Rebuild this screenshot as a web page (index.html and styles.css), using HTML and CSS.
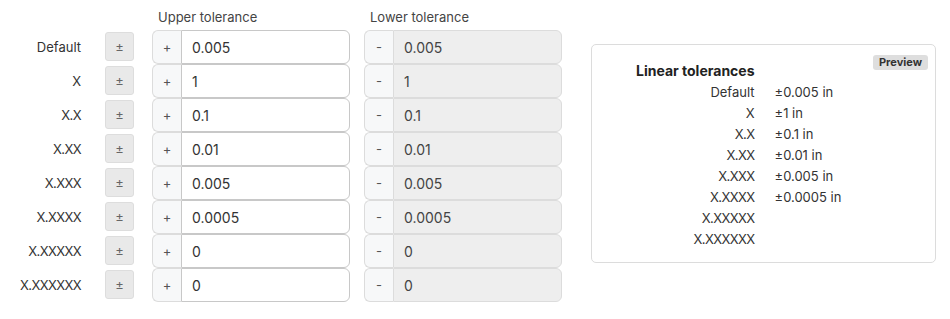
FILE: index.html
```html
<!DOCTYPE html>
<html lang="en">

<head>
    <meta charset="UTF-8">
    <meta name="viewport" content="width=device-width, initial-scale=1.0">
    <title>Linear tolerances</title>
    <link rel="stylesheet" href="styles.css">
</head>

<body>
    <div class="page">
        <div class="tolerance-grid">
            <div></div>
            <div></div>
            <div class="col-head">Upper tolerance</div>
            <div class="col-head">Lower tolerance</div>

            <div class="row-label">Default</div>
            <button class="pm-btn">±</button>
            <div class="input-group"><span class="prefix">+</span><input type="text" value="0.005"></div>
            <div class="input-group lower"><span class="prefix">-</span><input type="text" value="0.005" disabled></div>

            <div class="row-label">X</div>
            <button class="pm-btn">±</button>
            <div class="input-group"><span class="prefix">+</span><input type="text" value="1"></div>
            <div class="input-group lower"><span class="prefix">-</span><input type="text" value="1" disabled></div>

            <div class="row-label mask">X.X</div>
            <button class="pm-btn">±</button>
            <div class="input-group"><span class="prefix">+</span><input type="text" value="0.1"></div>
            <div class="input-group lower"><span class="prefix">-</span><input type="text" value="0.1" disabled></div>

            <div class="row-label mask">X.XX</div>
            <button class="pm-btn">±</button>
            <div class="input-group"><span class="prefix">+</span><input type="text" value="0.01"></div>
            <div class="input-group lower"><span class="prefix">-</span><input type="text" value="0.01" disabled></div>

            <div class="row-label mask">X.XXX</div>
            <button class="pm-btn">±</button>
            <div class="input-group"><span class="prefix">+</span><input type="text" value="0.005"></div>
            <div class="input-group lower"><span class="prefix">-</span><input type="text" value="0.005" disabled></div>

            <div class="row-label mask">X.XXXX</div>
            <button class="pm-btn">±</button>
            <div class="input-group"><span class="prefix">+</span><input type="text" value="0.0005"></div>
            <div class="input-group lower"><span class="prefix">-</span><input type="text" value="0.0005" disabled></div>

            <div class="row-label mask">X.XXXXX</div>
            <button class="pm-btn">±</button>
            <div class="input-group"><span class="prefix">+</span><input type="text" value="0"></div>
            <div class="input-group lower"><span class="prefix">-</span><input type="text" value="0" disabled></div>

            <div class="row-label mask">X.XXXXXX</div>
            <button class="pm-btn">±</button>
            <div class="input-group"><span class="prefix">+</span><input type="text" value="0"></div>
            <div class="input-group lower"><span class="prefix">-</span><input type="text" value="0" disabled></div>
        </div>

        <div class="preview-panel">
            <span class="preview-badge">Preview</span>
            <div class="preview-table">
                <div class="preview-title">Linear tolerances</div>
                <div></div>
                <div class="preview-label">Default</div><div>±0.005 in</div>
                <div class="preview-label">X</div><div>±1 in</div>
                <div class="preview-label mask">X.X</div><div>±0.1 in</div>
                <div class="preview-label mask">X.XX</div><div>±0.01 in</div>
                <div class="preview-label mask">X.XXX</div><div>±0.005 in</div>
                <div class="preview-label mask">X.XXXX</div><div>±0.0005 in</div>
                <div class="preview-label mask">X.XXXXX</div><div></div>
                <div class="preview-label mask">X.XXXXXX</div><div></div>
            </div>
        </div>
    </div>
</body>

</html>
```

FILE: styles.css
```css
body {
    font-family: 'Inter', 'Liberation Sans', sans-serif;
    font-size: 13px;
    color: #333;
    margin: 0;
    padding: 0;
    background-color: #fff;
}

.page {
    display: flex;
    align-items: flex-start;
    gap: 29px;
}

/* label | ± button | upper | lower */
.tolerance-grid {
    display: grid;
    grid-template-columns: 105px 47px 212px 198px;
    grid-template-rows: 30px repeat(8, 34px);
    align-items: center;
}

.col-head {
    padding-left: 6px;
    padding-bottom: 5px;
    align-self: end;
    color: #444;
}

.row-label {
    text-align: right;
    padding-right: 24px;
}

/* X.XX style precision masks sit tighter */
.mask {
    letter-spacing: -0.6px;
}

.pm-btn {
    width: 29px;
    height: 29px;
    padding: 0;
    margin: 2px 0 0;
    border: 1px solid #ddd;
    border-radius: 3px;
    background-color: #e9e9e9;
    color: #666;
    font-family: inherit;
    font-size: 13px;
    align-self: start;
}

.input-group {
    display: flex;
    width: 198px;
    height: 34px;
}

.prefix {
    width: 29px;
    flex-shrink: 0;
    box-sizing: border-box;
    display: flex;
    align-items: center;
    justify-content: center;
    background-color: #f7f8f9;
    border: 1px solid #dcdcdc;
    border-right: none;
    border-radius: 6px 0 0 6px;
    color: #555;
}

.input-group input {
    flex: 1;
    min-width: 0;
    box-sizing: border-box;
    height: 34px;
    margin: 0;
    padding: 0 10px;
    border: 1px solid #c8c8c8;
    border-radius: 0 6px 6px 0;
    background-color: #fff;
    font-family: inherit;
    font-size: 14px;
    color: #333;
}

.input-group.lower input {
    background-color: #eeeeee;
    border-color: #dcdcdc;
    color: #444;
}

.preview-panel {
    position: relative;
    margin-top: 44px;
    width: 345px;
    box-sizing: border-box;
    border: 1px solid #dcdcdc;
    border-radius: 5px;
    padding: 15px 0 13px 44px;
}

.preview-badge {
    position: absolute;
    top: 10px;
    right: 7px;
    background-color: #dedede;
    color: #333;
    font-size: 11px;
    font-weight: 700;
    padding: 0 6px;
    height: 15px;
    line-height: 15px;
    border-radius: 3px;
}

.preview-table {
    display: grid;
    grid-template-columns: auto auto;
    justify-content: start;
    column-gap: 20px;
    grid-auto-rows: 21px;
    align-items: center;
}

.preview-title {
    font-size: 14px;
    font-weight: 700;
    color: #222;
    height: 22px;
    line-height: 22px;
}

.preview-label {
    text-align: right;
}
```
